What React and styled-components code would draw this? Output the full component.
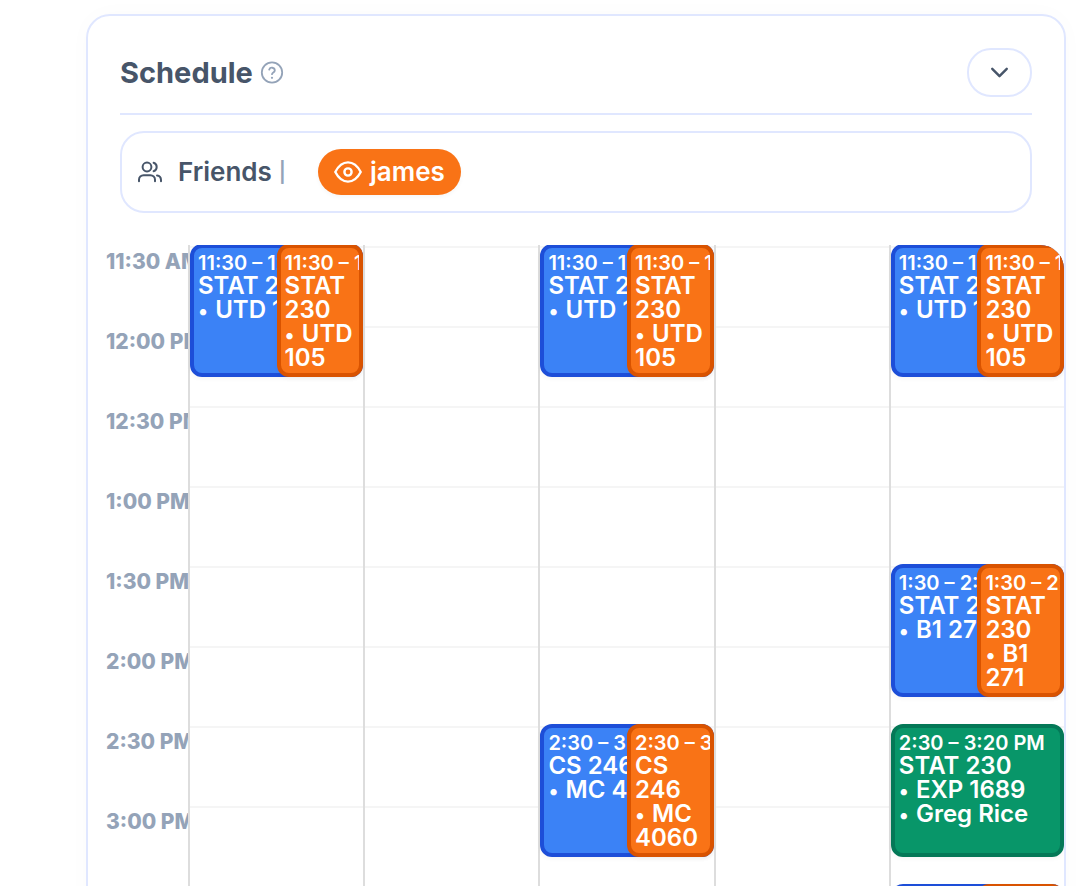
import React from 'react';
import styled, { createGlobalStyle } from 'styled-components';
import { ChevronDown } from 'lucide-react';

const colors = {
  border: '#e0e7ff',
  text: '#475569',
  muted: '#94a3b8',
  gridLine: '#f5f5f5',
  dayLine: '#dddddd',
  orange: '#f97316',
};

const eventColors = {
  blue: { fill: '#3b82f6', edge: '#1d4ed8' },
  orange: { fill: '#f97316', edge: '#d95300' },
  green: { fill: '#089669', edge: '#047857' },
};

const GlobalStyle = createGlobalStyle`
  * {
    box-sizing: border-box;
  }
  body {
    margin: 0;
    background: #fff;
    color: ${colors.text};
    font-family: Inter, 'Liberation Sans', sans-serif;
  }
`;

const Page = styled.main`
  height: 100vh;
  padding: 14px 24px 0 86px;
  overflow: hidden;
`;
const Card = styled.section`
  border: 2px solid ${colors.border};
  border-radius: 24px;
  box-shadow: 0 0 24px rgba(15, 23, 42, 0.02);
`;
const CardTop = styled.div`
  padding: 32px 32px 0;
`;
const Header = styled.header`
  display: flex;
  align-items: center;
  justify-content: space-between;
  padding-bottom: 16px;
  border-bottom: 2px solid ${colors.border};
`;
const TitleGroup = styled.div`
  display: flex;
  align-items: center;
  gap: 7px;
`;
const Title = styled.h1`
  margin: 0;
  font-size: 29px;
  line-height: 40px;
  font-weight: 700;
`;
const IconButton = styled.button`
  display: flex;
  padding: 0;
  border: 0;
  background: none;
  color: ${colors.muted};
`;
const ToggleButton = styled.button`
  display: flex;
  align-items: center;
  justify-content: center;
  width: 65px;
  height: 49px;
  padding: 0;
  border: 2px solid ${colors.border};
  border-radius: 24px;
  background: #fff;
  color: ${colors.text};
`;
const FriendsBar = styled.div`
  display: flex;
  align-items: center;
  margin-top: 16px;
  padding: 16px 14px;
  border: 2px solid ${colors.border};
  border-radius: 24px;
`;
const FriendsLabel = styled.span`
  margin: 0 7px 0 14px;
  font-size: 26px;
  line-height: 32px;
  font-weight: 600;
`;
const Divider = styled.span`
  color: ${colors.muted};
  font-size: 20px;
  line-height: 32px;
  font-weight: 600;
`;
const FriendButton = styled.button`
  display: flex;
  align-items: center;
  gap: 8px;
  height: 46px;
  margin-left: 32px;
  padding: 0 16px;
  border: 0;
  border-radius: 24px;
  background: ${colors.orange};
  box-shadow: 0 2px 4px rgba(0, 0, 0, 0.04);
  color: #fff;
  font-family: inherit;
  font-size: 26px;
  line-height: 32px;
  font-weight: 600;
`;

const Calendar = styled.div`
  display: grid;
  grid-template-columns: 100px repeat(5, 1fr);
  margin-top: 32px;
  border-radius: 24px;
  overflow: hidden;
`;
const TimeColumn = styled.div`
  padding-left: 18px;
  overflow: hidden;
`;
const TimeLabel = styled.div`
  height: 80px;
  padding-top: 4px;
  color: ${colors.muted};
  font-size: 21px;
  line-height: 25px;
  font-weight: 800;
  white-space: nowrap;
`;
const DayColumn = styled.div`
  display: grid;
  grid-template-columns: minmax(0, 1fr) minmax(0, 1fr);
  grid-template-rows: repeat(${props => props.$rows}, 80px);
  margin-top: -1px;
  border-left: 2px solid ${colors.dayLine};
  background: linear-gradient(${colors.gridLine} 2px, transparent 2px) 0 2px /
    100% 80px;
`;
const Event = styled.article`
  grid-column: ${props => (props.$half ? '2' : '1 / -1')};
  grid-row: ${props => props.$row};
  height: 133px;
  padding: 4px;
  border: 4px solid ${props => eventColors[props.$color].edge};
  border-radius: 12px;
  background: ${props => eventColors[props.$color].fill};
  box-shadow: 0 2px 4px rgba(0, 0, 0, 0.04);
  color: #fff;
  font-size: 24px;
  line-height: 24px;
  font-weight: 600;
  overflow: hidden;
`;
const EventTime = styled.div`
  font-size: 20px;
  line-height: 22px;
  white-space: nowrap;
`;
const Bullet = styled.span`
  margin-right: 1px;
  font-size: 20px;
  line-height: 20px;
`;

const times = [
  '11:30 AM',
  '12:00 PM',
  '12:30 PM',
  '1:00 PM',
  '1:30 PM',
  '2:00 PM',
  '2:30 PM',
  '3:00 PM',
  '3:30 PM',
];

const shared = (row, time, course, room) => [
  { row, time, course, details: [room], color: 'blue' },
  { row, time, course, details: [room], color: 'orange', half: true },
];

const days = [
  { name: 'Mon', events: shared(1, '11:30 – 12:20 PM', 'STAT 230', 'UTD 105') },
  { name: 'Tue', events: [] },
  {
    name: 'Wed',
    events: [
      ...shared(1, '11:30 – 12:20 PM', 'STAT 230', 'UTD 105'),
      ...shared(7, '2:30 – 3:20 PM', 'CS 246', 'MC 4060'),
    ],
  },
  { name: 'Thu', events: [] },
  {
    name: 'Fri',
    events: [
      ...shared(1, '11:30 – 12:20 PM', 'STAT 230', 'UTD 105'),
      ...shared(5, '1:30 – 2:20 PM', 'STAT 230', 'B1 271'),
      {
        row: 7,
        time: '2:30 – 3:20 PM',
        course: 'STAT 230',
        details: ['EXP 1689', 'Greg Rice'],
        color: 'green',
      },
      ...shared(9, '3:30 – 4:20 PM', 'CS 246', 'MC 4060'),
    ],
  },
];

const HelpIcon = () => (
  <svg
    width="24"
    height="24"
    viewBox="0 0 24 24"
    fill="none"
    stroke="currentColor"
    strokeWidth="1.8"
    strokeLinecap="round"
    strokeLinejoin="round"
    aria-hidden="true"
  >
    <circle cx="12" cy="11.5" r="10.2" />
    <path d="M9.2 8.6a2.9 2.9 0 0 1 5.6.8c0 1.9-2.8 2.1-2.8 3.8" />
    <path d="M12 16.8h.01" strokeWidth="2.2" />
  </svg>
);

const UsersIcon = () => (
  <svg
    width="28"
    height="28"
    viewBox="0 0 28 28"
    fill="none"
    stroke="currentColor"
    strokeWidth="2"
    strokeLinecap="round"
    aria-hidden="true"
  >
    <circle cx="11" cy="9" r="4.4" />
    <path d="M3 23.2v-1.4a4.6 4.6 0 0 1 4.6-4.6h6.8a4.6 4.6 0 0 1 4.6 4.6v1.4" />
    <path d="M17.6 4.8a4.4 4.4 0 0 1 0 8.4" />
    <path d="M21 17.4a4.6 4.6 0 0 1 4 4.5v1.3" />
  </svg>
);

const EyeIcon = () => (
  <svg
    width="28"
    height="22"
    viewBox="0 0 28 22"
    fill="none"
    stroke="currentColor"
    strokeWidth="2.4"
    strokeLinejoin="round"
    aria-hidden="true"
  >
    <path d="M1.3 11C4.6 4.6 9 1.4 14 1.4S23.4 4.6 26.7 11C23.4 17.4 19 20.6 14 20.6S4.6 17.4 1.3 11Z" />
    <circle cx="14" cy="11" r="3.6" />
  </svg>
);

export default function App() {
  return (
    <>
      <GlobalStyle />
      <Page>
        <Card>
          <CardTop>
            <Header>
              <TitleGroup>
                <Title>Schedule</Title>
                <IconButton type="button" aria-label="Help">
                  <HelpIcon />
                </IconButton>
              </TitleGroup>
              <ToggleButton type="button" aria-label="Collapse schedule">
                <ChevronDown size={29} strokeWidth={2} />
              </ToggleButton>
            </Header>
            <FriendsBar>
              <UsersIcon />
              <FriendsLabel>Friends</FriendsLabel>
              <Divider>|</Divider>
              <FriendButton type="button">
                <EyeIcon />
                james
              </FriendButton>
            </FriendsBar>
          </CardTop>
          <Calendar>
            <TimeColumn>
              {times.map(time => (
                <TimeLabel key={time}>{time}</TimeLabel>
              ))}
            </TimeColumn>
            {days.map(day => (
              <DayColumn key={day.name} $rows={times.length}>
                {day.events.map(event => (
                  <Event
                    key={`${event.row}-${event.color}`}
                    $row={event.row}
                    $color={event.color}
                    $half={event.half}
                  >
                    <EventTime>{event.time}</EventTime>
                    <div>{event.course}</div>
                    {event.details.map(detail => (
                      <div key={detail}>
                        <Bullet>•</Bullet> {detail}
                      </div>
                    ))}
                  </Event>
                ))}
              </DayColumn>
            ))}
          </Calendar>
        </Card>
      </Page>
    </>
  );
}
